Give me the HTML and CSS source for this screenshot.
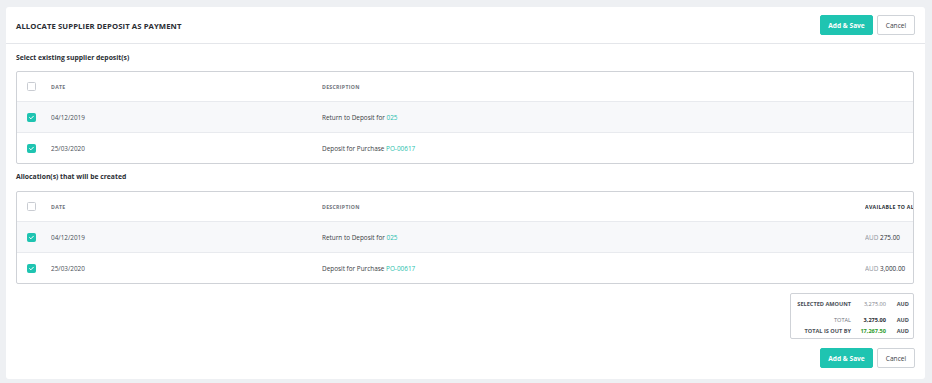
FILE: index.html
```html
<!DOCTYPE html>
<html>
<head>
<meta charset="utf-8">
<link rel="stylesheet" href="styles.css">
</head>
<body>
<div class="card">
  <div class="header">
    <div class="title">ALLOCATE SUPPLIER DEPOSIT AS PAYMENT</div>
    <div class="actions">
      <button class="btn btn-primary">Add &amp; Save</button>
      <button class="btn btn-default">Cancel</button>
    </div>
  </div>
  <div class="body">
    <div class="section-label">Select existing supplier deposit(s)</div>
    <div class="table">
      <div class="row head">
        <div class="cell cb"><span class="box"></span></div>
        <div class="cell">DATE</div>
        <div class="cell">DESCRIPTION</div>
        <div class="cell amt"></div>
      </div>
      <div class="row alt">
        <div class="cell cb"><span class="box on"><svg viewBox="0 0 9 9" width="9" height="9"><path d="M2.6 4.6 L3.9 5.8 L6.4 3.2" fill="none" stroke="#fff" stroke-width="1" stroke-linecap="round" stroke-linejoin="round"/></svg></span></div>
        <div class="cell">04/12/2019</div>
        <div class="cell desc">Return to Deposit for <span class="link">025</span></div>
        <div class="cell amt"></div>
      </div>
      <div class="row">
        <div class="cell cb"><span class="box on"><svg viewBox="0 0 9 9" width="9" height="9"><path d="M2.6 4.6 L3.9 5.8 L6.4 3.2" fill="none" stroke="#fff" stroke-width="1" stroke-linecap="round" stroke-linejoin="round"/></svg></span></div>
        <div class="cell">25/03/2020</div>
        <div class="cell desc">Deposit for Purchase <span class="link">PO-00617</span></div>
        <div class="cell amt"></div>
      </div>
    </div>

    <div class="section-label second">Allocation(s) that will be created</div>
    <div class="table">
      <div class="row head">
        <div class="cell cb"><span class="box"></span></div>
        <div class="cell">DATE</div>
        <div class="cell">DESCRIPTION</div>
        <div class="cell amt">AVAILABLE TO ALLOCATE</div>
      </div>
      <div class="row alt">
        <div class="cell cb"><span class="box on"><svg viewBox="0 0 9 9" width="9" height="9"><path d="M2.6 4.6 L3.9 5.8 L6.4 3.2" fill="none" stroke="#fff" stroke-width="1" stroke-linecap="round" stroke-linejoin="round"/></svg></span></div>
        <div class="cell">04/12/2019</div>
        <div class="cell desc">Return to Deposit for <span class="link">025</span></div>
        <div class="cell amt"><span class="cur">AUD</span> 275.00</div>
      </div>
      <div class="row">
        <div class="cell cb"><span class="box on"><svg viewBox="0 0 9 9" width="9" height="9"><path d="M2.6 4.6 L3.9 5.8 L6.4 3.2" fill="none" stroke="#fff" stroke-width="1" stroke-linecap="round" stroke-linejoin="round"/></svg></span></div>
        <div class="cell">25/03/2020</div>
        <div class="cell desc">Deposit for Purchase <span class="link">PO-00617</span></div>
        <div class="cell amt"><span class="cur">AUD</span> 3,000.00</div>
      </div>
    </div>

    <div class="summary-wrap">
      <div class="summary">
        <div class="s-label first">SELECTED AMOUNT</div><div class="s-val light first">3,275.00</div><div class="s-cur first">AUD</div>
        <div class="s-label plain">TOTAL</div><div class="s-val strong">3,275.00</div><div class="s-cur">AUD</div>
        <div class="s-label">TOTAL IS OUT BY</div><div class="s-val green">17,267.50</div><div class="s-cur">AUD</div>
      </div>
    </div>

    <div class="footer-actions">
      <button class="btn btn-primary">Add &amp; Save</button>
      <button class="btn btn-default">Cancel</button>
    </div>
  </div>
</div>
</body>
</html>
```
FILE: styles.css
```css
* { box-sizing: border-box; }
html, body { margin: 0; padding: 0; }
body {
  background: #eef0f3;
  font-family: "Open Sans", "Noto Sans", sans-serif;
  color: #2b2f36;
  width: 932px;
  height: 383px;
  overflow: hidden;
}
.card {
  margin: 7px 7px 0 6px;
  width: 919px;
  height: 372px;
  background: #fff;
  border-radius: 3px;
}
.header {
  height: 37px;
  border-bottom: 1px solid #e4e6ea;
  display: flex;
  align-items: center;
  justify-content: space-between;
  padding: 0 10px 0 10px;
}
.title {
  font-size: 7.7px;
  font-weight: 700;
  color: #2a2d33;
  letter-spacing: 0.1px;
  padding-top: 1px;
}
.actions, .footer-actions {
  display: flex;
  gap: 4px;
}
.btn {
  height: 20px;
  border-radius: 2px;
  font-family: "Open Sans", "Noto Sans", sans-serif;
  font-size: 6.6px;
  padding: 0;
  cursor: pointer;
}
.btn-primary {
  width: 53px;
  background: #1fc4b1;
  border: 1px solid #1fc4b1;
  color: #fff;
  font-weight: 700;
}
.btn-default {
  width: 38px;
  background: #fff;
  border: 1px solid #cfd3d8;
  color: #3a3e45;
}
.body {
  padding: 0 11px 0 10px;
}
.section-label {
  font-size: 6.8px;
  font-weight: 700;
  color: #2a2d33;
  height: 10px;
  line-height: 10px;
  margin-top: 9px;
  margin-bottom: 8px;
}
.section-label.second {
  margin-top: 8px;
  margin-bottom: 9px;
}
.table {
  border: 1px solid #cfd2d7;
  border-radius: 2px;
  overflow: hidden;
}
.row {
  display: grid;
  grid-template-columns: 34px 271px 543px 1fr;
  height: 31px;
  align-items: center;
  border-top: 1px solid #e8eaee;
  font-size: 6.4px;
  color: #4a4f57;
}
.row.head {
  height: 29px;
  border-top: none;
  font-size: 5.2px;
  font-weight: 700;
  color: #6f747c;
  letter-spacing: 0.3px;
}
.row.alt { background: #f7f8fa; }
.cell {
  white-space: nowrap;
  overflow: hidden;
}
.cb {
  padding-left: 10px;
  display: flex;
  align-items: center;
}
.box {
  width: 9px;
  height: 9px;
  border: 1px solid #c9ccd2;
  border-radius: 1.5px;
  background: #fff;
  display: inline-flex;
  align-items: center;
  justify-content: center;
}
.box.on {
  background: #1fc4b1;
  border-color: #1fc4b1;
}
.box.on svg { margin: -1px; }
.desc { color: #3a3e45; }
.link { color: #1fbfae; }
.amt { color: #2b2f36; }
.cur { color: #9297a0; }
.summary-wrap {
  display: flex;
  justify-content: flex-end;
  margin-top: 9px;
}
.summary {
  width: 124px;
  border: 1px solid #cfd2d7;
  border-radius: 2px;
  display: grid;
  grid-template-columns: 56px 35px 1fr;
  padding: 5px 4px 2px 4px;
  font-size: 5.6px;
  font-weight: 700;
  row-gap: 1px;
}
.summary > div { line-height: 10px; }
.summary > .first { padding-bottom: 5px; }
.s-label { text-align: right; color: #4a4f57; }
.s-label.plain { font-weight: 400; color: #6f747c; }
.s-val { text-align: right; }
.s-val.light { color: #7d828a; font-weight: 400; }
.s-val.strong { color: #2a2d33; }
.s-val.green { color: #2b9a2b; }
.s-cur { text-align: right; color: #4a4f57; }
.footer-actions {
  justify-content: flex-end;
  margin-top: 9px;
  margin-right: -1px;
}
```
